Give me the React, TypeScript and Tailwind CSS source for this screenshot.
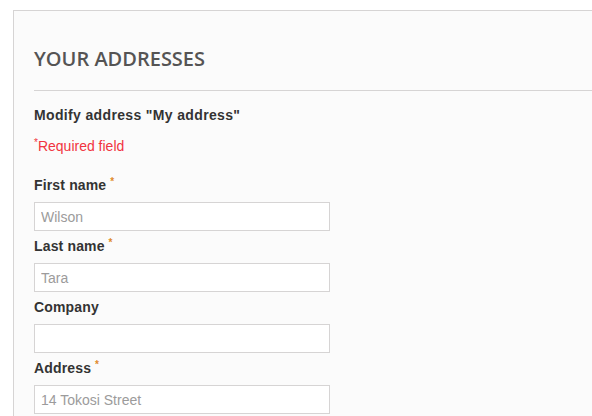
import React from "react";

const fields = [
  { label: "First name", value: "Wilson", required: true },
  { label: "Last name", value: "Tara", required: true },
  { label: "Company", value: "", required: false },
  { label: "Address", value: "14 Tokosi Street", required: true },
];

export default function App() {
  return (
    <div
      className="w-[592px] h-[416px] overflow-hidden bg-white pt-[10px] pl-[13px]"
      style={{ fontFamily: "Arial, 'Liberation Sans', sans-serif" }}
    >
      <div className="h-[500px] border-t border-l border-[#d6d4d4] bg-[#fbfbfb] pl-[20px]">
        <h1
          className="pt-[35px] pb-[19px] border-b border-[#d6d4d4] text-[20px] leading-[25px] font-semibold uppercase text-[#555454]"
          style={{ fontFamily: "'Open Sans', sans-serif" }}
        >
          Your addresses
        </h1>

        <p className="mt-[15px] text-[14px] leading-[18px] font-bold text-[#333] tracking-[0.35px]">
          Modify address "My address"
        </p>

        <p className="mt-[13px] text-[14px] leading-[18px] text-[#f13340]">
          <sup className="text-[10px]">*</sup>Required field
        </p>

        <form className="mt-[21px] w-[296px]">
          {fields.map((f) => (
            <div key={f.label} className="mb-[6px]">
              <label className="block pb-[8px] text-[14px] leading-[18px] font-bold text-[#333] tracking-[0.15px]">
                {f.label}
                {f.required && (
                  <sup className="ml-[4px] text-[10px] text-[#e08a2a]">*</sup>
                )}
              </label>
              <input
                type="text"
                readOnly
                value={f.value}
                className="block w-[296px] h-[29px] border border-[#d6d4d4] bg-white px-[6px] text-[14px] text-[#9c9b9b] outline-none"
              />
            </div>
          ))}
        </form>
      </div>
    </div>
  );
}
